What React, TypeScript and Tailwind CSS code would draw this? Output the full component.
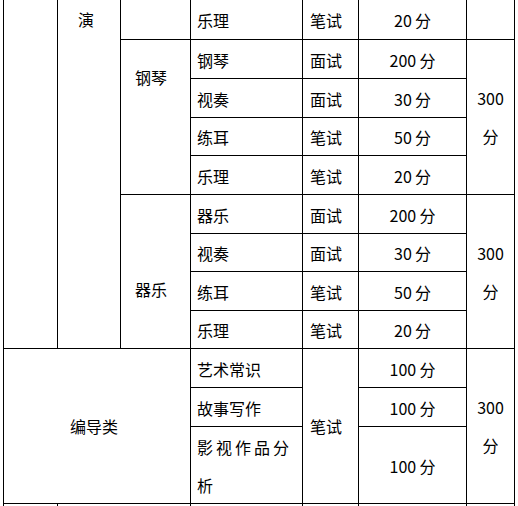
const font = { fontFamily: '"Noto Sans CJK SC", "Liberation Sans", sans-serif' };

type Cell = {
  text?: React.ReactNode;
  cls?: string;
};

// Plain cell classes, one per kind of column.
const itemCls = 'bg-white flex items-center pl-[6px] pt-px';
const modeCls = 'bg-white flex items-center pl-[7px] pt-px';
const scoreCls = 'bg-white flex items-center justify-center pt-px';
const totalCls = 'bg-white row-span-4 flex items-center justify-center text-center leading-[38px]';

function Total() {
  return (
    <span>
      300
      <br />分
    </span>
  );
}

function subRows(items: [string, string, string][]): Cell[][] {
  return items.map(([item, mode, score]) => [
    { text: item, cls: itemCls },
    { text: mode, cls: modeCls },
    { text: score, cls: scoreCls },
  ]);
}

export default function App() {
  const piano = subRows([
    ['钢琴', '面试', '200\u2009分'],
    ['视奏', '面试', '30\u2009分'],
    ['练耳', '笔试', '50\u2009分'],
    ['乐理', '笔试', '20\u2009分'],
  ]);
  const instrument = subRows([
    ['器乐', '面试', '200\u2009分'],
    ['视奏', '面试', '30\u2009分'],
    ['练耳', '笔试', '50\u2009分'],
    ['乐理', '笔试', '20\u2009分'],
  ]);

  const cells: Cell[] = [
    // row 1 (continued from above)
    { cls: 'bg-white row-span-9' },
    { text: '演', cls: 'bg-white row-span-9 flex justify-center items-start pr-[6px] leading-[39px]' },
    { cls: 'bg-white' },
    { text: '乐理', cls: itemCls },
    { text: '笔试', cls: modeCls },
    { text: '20\u2009分', cls: scoreCls },
    { cls: 'bg-white' },
    // 钢琴
    { text: '钢琴', cls: 'bg-white row-span-4 pl-[14px] pt-[18px] leading-[39px]' },
    ...piano[0],
    { text: <Total />, cls: totalCls },
    ...piano.slice(1).flat(),
    // 器乐
    { text: '器乐', cls: 'bg-white row-span-4 pl-[14px] pt-[75px] leading-[39px]' },
    ...instrument[0],
    { text: <Total />, cls: totalCls },
    ...instrument.slice(1).flat(),
    // 编导类
    { text: '编导类', cls: 'bg-white col-span-3 row-span-3 flex items-center justify-center pr-[6px]' },
    { text: '艺术常识', cls: itemCls },
    { text: '笔试', cls: 'bg-white row-span-3 flex items-center pl-[7px]' },
    { text: '100\u2009分', cls: scoreCls },
    { text: <Total />, cls: 'bg-white row-span-3 flex items-center justify-center text-center leading-[38px]' },
    { text: '故事写作', cls: itemCls },
    { text: '100\u2009分', cls: scoreCls },
    {
      text: (
        <span>
          <span className="tracking-[3px]">影视作品分</span>
          <br />析
        </span>
      ),
      cls: 'bg-white pl-[6px] pt-px leading-[38px]',
    },
    { text: '100\u2009分', cls: scoreCls },
    // next row, cut off by the window
    { cls: 'bg-white' },
    { cls: 'bg-white col-span-2' },
    { cls: 'bg-white' },
    { cls: 'bg-white' },
    { cls: 'bg-white' },
    { cls: 'bg-white' },
  ];

  return (
    <div className="h-[506px] w-[518px] overflow-hidden bg-white text-[16px] text-black" style={font}>
      <div className="ml-[3px] grid w-fit grid-cols-[53px_62px_69px_111px_55px_107px_47px] grid-rows-[39px_38px_38px_37px_38px_38px_37px_38px_37px_38px_38px_76px_38px] gap-px bg-black px-px">
        {cells.map((c, i) => (
          <div key={i} className={c.cls}>
            {c.text}
          </div>
        ))}
      </div>
    </div>
  );
}
